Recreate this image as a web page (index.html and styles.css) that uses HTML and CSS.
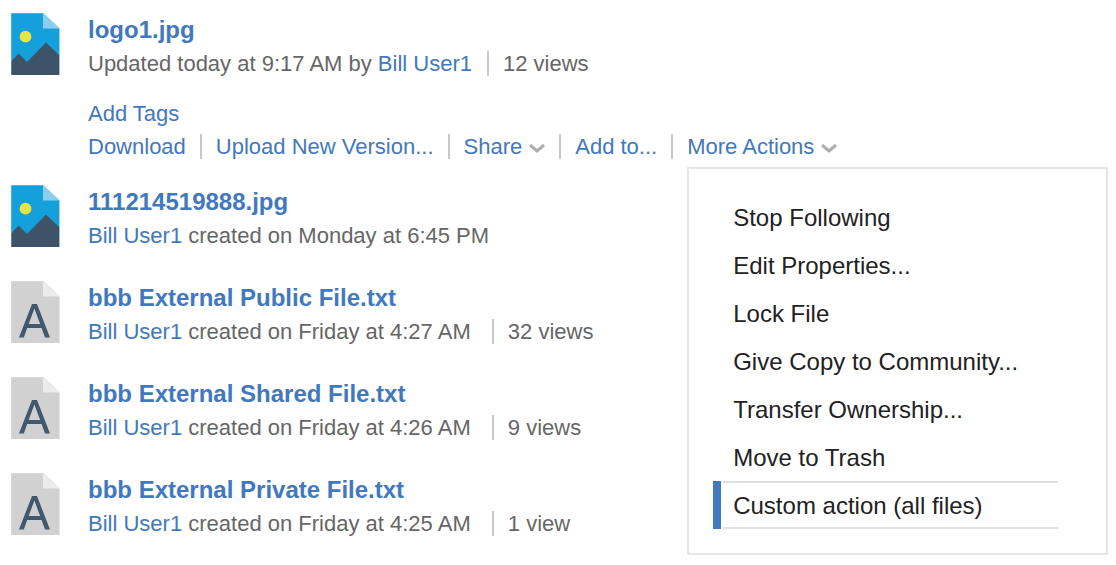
FILE: index.html
```html
<!DOCTYPE html>
<html lang="en">
<head>
<meta charset="utf-8">
<title>Files</title>
<link rel="stylesheet" href="styles.css">
</head>
<body>
<svg class="symbols" aria-hidden="true">
  <symbol id="image-file" viewBox="0 0 49 62">
    <path fill="#14a0da" d="M0 0H32L48.500 15.500V62H0Z"/>
    <path fill="#8dcfeb" d="M32 0L48.500 15.500H32Z"/>
    <circle cx="14.500" cy="23.700" r="5.900" fill="#e7e545"/>
    <path fill="#3e5368" d="M0 48.500L7.700 40.500L16 49L35 29.500L48.500 42.500V62H0Z"/>
    <path fill="none" stroke="#a7d8ee" stroke-width="1" stroke-opacity="0.7" d="M0 62V0H32L48.500 15.500V62"/>
  </symbol>
  <symbol id="text-file" viewBox="0 0 49 62">
    <path fill="#d1d1d1" d="M0 0H32L48.500 15.500V62H0Z"/>
    <path fill="#ececec" d="M32 0L48.500 15.500H32Z"/>
    <path fill="none" stroke="#e4e4e4" stroke-width="1" d="M0 62V0H32L48.500 15.500V62"/>
    <path fill="#41586f" fill-rule="evenodd" d="M8 56.500L21 23H26L39 56.500H34L30.600 47H16.200L12.800 56.500ZM17.700 43H29.100L23.400 27.500Z"/>
  </symbol>
  <symbol id="chevron" viewBox="0 0 16 10">
    <path fill="none" stroke="#adadad" stroke-width="3" d="M1 1L8 7L15 1"/>
  </symbol>
</svg>
<main class="files">
  <article class="file">
    <svg class="file-icon" aria-hidden="true"><use href="#image-file"/></svg>
    <div class="file-body">
      <h2 class="title"><a href="#">logo1.jpg</a></h2>
      <p class="meta">Updated today at 9:17 AM by <a href="#">Bill User1</a><span class="views">12 views</span></p>
      <div class="details">
        <a class="tags" href="#">Add Tags</a>
        <div class="actions">
          <a class="action" href="#">Download</a>
          <button class="action" type="button">Upload New Version...</button>
          <button class="action" type="button">Share<svg class="chevron" aria-hidden="true"><use href="#chevron"/></svg></button>
          <button class="action" type="button">Add to...</button>
          <div class="action more">
            <button type="button" aria-haspopup="true" aria-expanded="true">More Actions<svg class="chevron" aria-hidden="true"><use href="#chevron"/></svg></button>
            <ul class="menu">
              <li><button type="button">Stop Following</button></li>
              <li><button type="button">Edit Properties...</button></li>
              <li><button type="button">Lock File</button></li>
              <li><button type="button">Give Copy to Community...</button></li>
              <li><button type="button">Transfer Ownership...</button></li>
              <li><button type="button">Move to Trash</button></li>
              <li class="selected"><button type="button">Custom action (all files)</button></li>
            </ul>
          </div>
        </div>
      </div>
    </div>
  </article>
  <article class="file">
    <svg class="file-icon" aria-hidden="true"><use href="#image-file"/></svg>
    <div class="file-body">
      <h2 class="title"><a href="#">111214519888.jpg</a></h2>
      <p class="meta"><a href="#">Bill User1</a> created on Monday at 6:45 PM</p>
    </div>
  </article>
  <article class="file">
    <svg class="file-icon" aria-hidden="true"><use href="#text-file"/></svg>
    <div class="file-body">
      <h2 class="title"><a href="#">bbb External Public File.txt</a></h2>
      <p class="meta"><a href="#">Bill User1</a> created on Friday at 4:27 AM <span class="views">32 views</span></p>
    </div>
  </article>
  <article class="file">
    <svg class="file-icon" aria-hidden="true"><use href="#text-file"/></svg>
    <div class="file-body">
      <h2 class="title"><a href="#">bbb External Shared File.txt</a></h2>
      <p class="meta"><a href="#">Bill User1</a> created on Friday at 4:26 AM <span class="views">9 views</span></p>
    </div>
  </article>
  <article class="file">
    <svg class="file-icon" aria-hidden="true"><use href="#text-file"/></svg>
    <div class="file-body">
      <h2 class="title"><a href="#">bbb External Private File.txt</a></h2>
      <p class="meta"><a href="#">Bill User1</a> created on Friday at 4:25 AM <span class="views">1 view</span></p>
    </div>
  </article>
</main>
</body>
</html>
```
FILE: styles.css
```css
* {
  box-sizing: border-box;
}

body {
  margin: 0;
  background: #fff;
  color: #666;
  font: 22px/33px "Liberation Sans", Arial, sans-serif;
}

a,
button {
  color: #4178be;
  text-decoration: none;
}

button {
  margin: 0;
  padding: 0;
  border: 0;
  background: none;
  font: inherit;
  cursor: pointer;
}

.symbols {
  display: none;
}

.file {
  display: flex;
  gap: 28px;
  padding: 13px 11px 0;
}

.file-icon {
  flex: none;
  width: 49px;
  height: 62px;
}

.file-body {
  flex: 1;
  padding-bottom: 16px;
}

.title,
.meta {
  margin: 0;
}

.title {
  font-size: 24px;
  line-height: 34px;
}

.views {
  display: inline-block;
  margin-left: 15px;
  padding-left: 14px;
  border-left: 2px solid #c8c8c8;
  line-height: 25px;
}

.details {
  margin: 17px 0 -7px;
}

.tags {
  display: block;
}

.actions {
  display: flex;
  align-items: center;
  height: 33px;
}

.action {
  line-height: 25px;
  white-space: nowrap;
}

.action + .action {
  margin-left: 14px;
  padding-left: 14px;
  border-left: 2px solid #c8c8c8;
}

.chevron {
  width: 16px;
  height: 10px;
  margin-left: 7px;
}

.more {
  position: relative;
}

.menu {
  position: absolute;
  top: 100%;
  left: 14px;
  margin: 8px 0 0;
  padding: 24px 48px 24px 24px;
  border: 2px solid #e6e6e6;
  background: #fff;
  list-style: none;
}

.menu li {
  display: flex;
  width: 345px;
  height: 48px;
  border-left: 8px solid transparent;
  padding-left: 2px;
}

.menu button {
  flex: 1;
  padding: 0 10px;
  border: solid transparent;
  border-width: 2px 0;
  color: #222;
  font-size: 24px;
  text-align: left;
}

.menu .selected {
  border-left: 0;
  padding-left: 0;
  gap: 2px;
}

.menu .selected::before {
  content: "";
  width: 8px;
  background: #4178be;
}

.menu .selected button {
  border-color: #e0e0e0;
}
```
